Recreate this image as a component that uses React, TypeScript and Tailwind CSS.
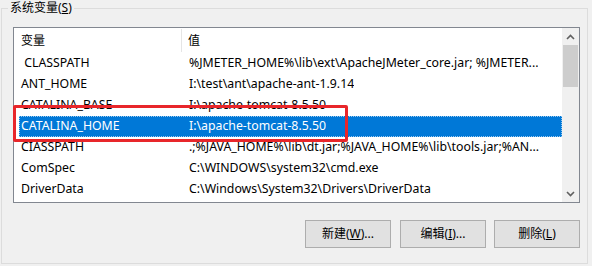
import React from "react";

const rows: [string, string][] = [
  [" CLASSPATH", "%JMETER_HOME%\\lib\\ext\\ApacheJMeter_core.jar; %JMETER..."],
  ["ANT_HOME", "I:\\test\\ant\\apache-ant-1.9.14"],
  ["CATALINA_BASE", "I:\\apache-tomcat-8.5.50"],
  ["CATALINA_HOME", "I:\\apache-tomcat-8.5.50"],
  ["CIASSPATH", ".;%JAVA_HOME%\\lib\\dt.jar;%JAVA_HOME%\\lib\\tools.jar;%AN..."],
  ["ComSpec", "C:\\WINDOWS\\system32\\cmd.exe"],
  ["DriverData", "C:\\Windows\\System32\\Drivers\\DriverData"],
];

const font = {
  fontFamily: '"Segoe UI", "Noto Sans", "Noto Sans CJK SC", sans-serif',
};

export default function App() {
  return (
    <div
      className="w-[592px] h-[266px] bg-[#f0f0f0] text-[12px] text-black overflow-hidden"
      style={font}
    >
      <div className="pt-[8px] pl-[1px]">
        <div className="relative w-[587px] h-[256px] border border-[#dcdcdc]">
          <span className="absolute left-[6px] -top-[9px] px-[2px] bg-[#f0f0f0] leading-[16px]">
            系统变量(<span className="underline">S</span>)
          </span>

          {/* list view */}
          <div className="relative ml-[11px] mt-[18px] w-[567px] h-[176px] border border-[#828790] bg-white flex overflow-hidden">
            <div className="flex-1 flex flex-col overflow-hidden">
              <div className="h-[25px] flex shrink-0 items-center">
                <div className="w-[168px] h-[23px] flex items-center pl-[7px] border-r border-[#e5e5e5]">
                  变量
                </div>
                <div className="pl-[6px]">值</div>
              </div>
              {rows.map(([n, v], i) => {
                const sel = i === 3;
                return (
                  <div key={i} className="h-[21px] flex shrink-0 items-center pl-[5px] text-[12.3px]">
                    <div
                      className={
                        "flex-1 h-[21px] flex items-center whitespace-pre " +
                        (sel ? "bg-[#0078d7] text-white outline outline-1 outline-dotted outline-[#99c9ef] -outline-offset-1" : "")
                      }
                    >
                      <div className="w-[163px] pl-[2px] shrink-0 overflow-hidden">{n}</div>
                      <div className="pl-[7px] overflow-hidden whitespace-nowrap">{v}</div>
                    </div>
                  </div>
                );
              })}
            </div>
            {/* scrollbar */}
            <div className="w-[17px] h-full bg-[#f0f0f0] flex flex-col items-center shrink-0">
              <div className="h-[17px] flex items-center justify-center">
                <svg width="9" height="6" viewBox="0 0 9 6">
                  <path d="M1 5 L4.5 1.5 L8 5" fill="none" stroke="#606060" strokeWidth="1.6" />
                </svg>
              </div>
              <div className="w-[15px] h-[42px] bg-[#cdcdcd]" />
              <div className="flex-1" />
              <div className="h-[17px] flex items-center justify-center">
                <svg width="9" height="6" viewBox="0 0 9 6">
                  <path d="M1 1 L4.5 4.5 L8 1" fill="none" stroke="#606060" strokeWidth="1.6" />
                </svg>
              </div>
            </div>
          </div>

          {/* buttons */}
          <div className="flex justify-end gap-[8px] mt-[17px] pr-[7px]">
            <button className="w-[86px] h-[28px] bg-[#e1e1e1] border border-[#adadad] mr-[1px]">
              新建(<span className="underline">W</span>)...
            </button>
            <button className="w-[86px] h-[28px] bg-[#e1e1e1] border border-[#adadad]">
              编辑(<span className="underline">I</span>)...
            </button>
            <button className="w-[86px] h-[28px] bg-[#e1e1e1] border border-[#adadad]">
              删除(<span className="underline">L</span>)
            </button>
          </div>

          {/* red annotation */}
          <div className="absolute left-[11px] top-[96px] w-[335px] h-[37px] border-[3px] border-[#e8262a] rounded-[2px] pointer-events-none" />
        </div>
      </div>
    </div>
  );
}
